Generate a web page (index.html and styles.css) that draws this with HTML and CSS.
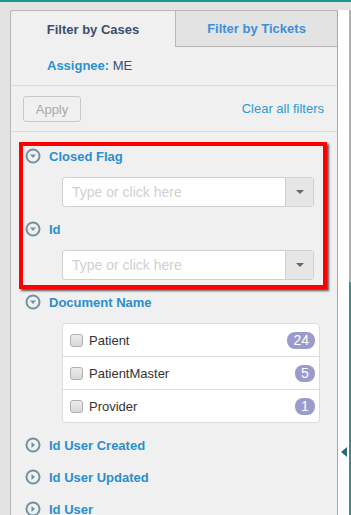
FILE: index.html
```html
<!DOCTYPE html>
<html>

<head>
    <meta name="viewport" content="width=device-width, initial-scale=1">
    <link rel="stylesheet" href="styles.css">
</head>

<body>
    <div class="page">
        <div class="panel">
            <div class="tabs">
                <div class="tab active">Filter by Cases</div>
                <div class="tab">Filter by Tickets</div>
            </div>

            <div class="assignee"><b>Assignee:</b> ME</div>

            <div class="actions">
                <button class="apply" disabled>Apply</button>
                <a class="clear" href="#">Clear all filters</a>
            </div>

            <div class="filters">
                <div class="filter">
                    <div class="filter-head">
                        <svg class="toggle" width="16" height="16" viewBox="0 0 16 16">
                            <circle cx="8" cy="8" r="6.5" fill="none" stroke="#7592a2" stroke-width="2"/>
                            <path d="M5 6.4 L11 6.4 L8 9.9 Z" fill="#7592a2"/>
                        </svg>
                        <span>Closed Flag</span>
                    </div>
                    <div class="filter-body">
                        <div class="combo">
                            <input type="text" placeholder="Type or click here">
                            <span class="combo-btn"><i class="caret"></i></span>
                        </div>
                    </div>
                </div>

                <div class="filter">
                    <div class="filter-head">
                        <svg class="toggle" width="16" height="16" viewBox="0 0 16 16">
                            <circle cx="8" cy="8" r="6.5" fill="none" stroke="#7592a2" stroke-width="2"/>
                            <path d="M5 6.4 L11 6.4 L8 9.9 Z" fill="#7592a2"/>
                        </svg>
                        <span>Id</span>
                    </div>
                    <div class="filter-body">
                        <div class="combo">
                            <input type="text" placeholder="Type or click here">
                            <span class="combo-btn"><i class="caret"></i></span>
                        </div>
                    </div>
                </div>

                <div class="filter">
                    <div class="filter-head">
                        <svg class="toggle" width="16" height="16" viewBox="0 0 16 16">
                            <circle cx="8" cy="8" r="6.5" fill="none" stroke="#7592a2" stroke-width="2"/>
                            <path d="M5 6.4 L11 6.4 L8 9.9 Z" fill="#7592a2"/>
                        </svg>
                        <span>Document Name</span>
                    </div>
                    <div class="filter-body wide">
                        <ul class="options">
                            <li><span class="check"></span>Patient<span class="badge">24</span></li>
                            <li><span class="check"></span>PatientMaster<span class="badge">5</span></li>
                            <li><span class="check"></span>Provider<span class="badge">1</span></li>
                        </ul>
                    </div>
                </div>

                <div class="filter">
                    <div class="filter-head">
                        <svg class="toggle" width="16" height="16" viewBox="0 0 16 16">
                            <circle cx="8" cy="8" r="6.5" fill="none" stroke="#7592a2" stroke-width="2"/>
                            <path d="M6.5 5 L6.5 11 L10 8 Z" fill="#7592a2"/>
                        </svg>
                        <span>Id User Created</span>
                    </div>
                </div>

                <div class="filter">
                    <div class="filter-head">
                        <svg class="toggle" width="16" height="16" viewBox="0 0 16 16">
                            <circle cx="8" cy="8" r="6.5" fill="none" stroke="#7592a2" stroke-width="2"/>
                            <path d="M6.5 5 L6.5 11 L10 8 Z" fill="#7592a2"/>
                        </svg>
                        <span>Id User Updated</span>
                    </div>
                </div>

                <div class="filter">
                    <div class="filter-head">
                        <svg class="toggle" width="16" height="16" viewBox="0 0 16 16">
                            <circle cx="8" cy="8" r="6.5" fill="none" stroke="#7592a2" stroke-width="2"/>
                            <path d="M6.5 5 L6.5 11 L10 8 Z" fill="#7592a2"/>
                        </svg>
                        <span>Id User</span>
                    </div>
                </div>
            </div>

            <!-- annotation box drawn over the first two filters -->
            <div class="highlight"></div>
        </div>

        <div class="rail">
            <i class="collapse"></i>
        </div>
    </div>
</body>

</html>
```

FILE: styles.css
```css
html,
body {
    margin: 0;
    height: 100%;
    overflow: hidden;
}

body {
    font-family: "Liberation Sans", Arial, Helvetica, sans-serif;
    font-size: 13px;
    color: #333;
    background-color: #e3e3e3;
    border-top: 2px solid #17998b;
    box-sizing: border-box;
}

.page {
    display: flex;
    height: 100%;
    padding: 8px 0 0 10px;
    box-sizing: border-box;
}

.panel {
    position: relative;
    width: 328px;
    background-color: #f0f0f0;
    border: 1px solid #b8b8b8;
    border-right-color: #a8a8a8;
    border-bottom: none;
    border-radius: 3px 0 0 0;
    box-sizing: border-box;
}

.tabs {
    display: flex;
    height: 36px;
}

.tab {
    display: flex;
    align-items: center;
    justify-content: center;
    font-weight: bold;
    box-sizing: border-box;
}

.tab.active {
    width: 164px;
    color: #3c4e70;
}

.tab:not(.active) {
    flex: 1;
    color: #3f8fd6;
    background-color: #e3e3e3;
    border-left: 1px solid #b8b8b8;
    border-bottom: 1px solid #b8b8b8;
}

.assignee {
    height: 38px;
    line-height: 38px;
    padding-left: 36px;
    color: #3c4e70;
    border-bottom: 1px solid #dcdcdc;
}

.assignee b {
    color: #2a93cf;
}

.actions {
    display: flex;
    align-items: center;
    justify-content: space-between;
    height: 45px;
    padding: 0 13px 0 12px;
    border-bottom: 1px solid #dcdcdc;
}

.apply {
    width: 58px;
    height: 26px;
    font-family: inherit;
    font-size: 13px;
    color: #a8a8a8;
    background-color: #f0f0f0;
    border: 1px solid #c8c8c8;
    border-radius: 3px;
    margin-top: 1px;
}

.clear {
    color: #2a9ad6;
    text-decoration: none;
}

.filters {
    padding-top: 8px;
}

.filter-head {
    display: flex;
    align-items: center;
    height: 32px;
    padding-left: 14px;
    font-weight: bold;
    color: #2a8fcd;
}

.toggle {
    margin-right: 8px;
}

.filter-body {
    padding: 5px 23px 6px 51px;
}

.filter-body.wide {
    padding-right: 17px;
}

.combo {
    display: flex;
    height: 30px;
    background-color: #fff;
    border: 1px solid #d0d0d0;
    border-radius: 3px;
    box-sizing: border-box;
}

.combo input {
    flex: 1;
    min-width: 0;
    border: none;
    outline: none;
    background: transparent;
    padding: 0 9px;
    font-family: inherit;
    font-size: 14px;
}

.combo input::placeholder {
    color: #cfcfcf;
}

.combo-btn {
    display: flex;
    align-items: center;
    justify-content: center;
    width: 27px;
    background-color: #e6e6e6;
    border-left: 1px solid #d0d0d0;
    border-radius: 0 3px 3px 0;
}

.caret {
    width: 0;
    height: 0;
    border-left: 4px solid transparent;
    border-right: 4px solid transparent;
    border-top: 4px solid #666;
}

.options {
    list-style: none;
    margin: 0;
    padding: 0;
    background-color: #fff;
    border: 1px solid #dcdcdc;
    border-radius: 4px;
}

.options li {
    display: flex;
    align-items: center;
    height: 33px;
    padding: 0 4px 0 7px;
    border-top: 1px solid #dcdcdc;
    box-sizing: border-box;
    color: #333;
}

.options li:first-child {
    border-top: none;
    height: 32px;
}

.check {
    width: 11px;
    height: 11px;
    margin-right: 6px;
    background: linear-gradient(#ececec, #d8d8d8);
    border: 1px solid #b0b0b0;
    border-radius: 3px;
}

.badge {
    margin-left: auto;
    min-width: 8px;
    height: 17px;
    line-height: 17px;
    padding: 0 6px;
    font-size: 14px;
    text-align: center;
    color: #fff;
    background-color: #9b9bcb;
    border-radius: 8px;
}

.highlight {
    position: absolute;
    left: 8px;
    top: 131px;
    width: 308px;
    height: 147px;
    border: 4px solid #ff0000;
    box-sizing: border-box;
    box-shadow: 2px 2px 2px #555;
    pointer-events: none;
}

.rail {
    display: flex;
    flex-direction: column;
    width: 13px;
    background: linear-gradient(#b0b0b0 0 272px, #3c8c8c 272px) right top / 2px 100% no-repeat, #fff;
    box-sizing: border-box;
}

.collapse {
    width: 0;
    height: 0;
    margin: 437px 0 0 3px;
    border-top: 5px solid transparent;
    border-bottom: 5px solid transparent;
    border-right: 6px solid #2b6a7c;
}
```
